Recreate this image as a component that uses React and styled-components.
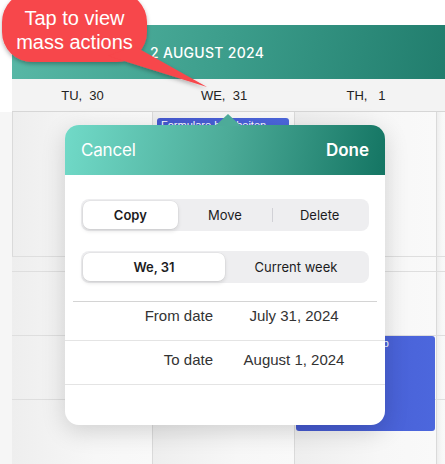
import React from 'react';
import styled, { createGlobalStyle } from 'styled-components';

const GlobalStyle = createGlobalStyle`
  html, body {
    margin: 0;
    padding: 0;
    background: #ffffff;
  }
  body {
    width: 445px;
    height: 464px;
    overflow: hidden;
    font-family: "Liberation Sans", Arial, sans-serif;
  }
`;

const Page = styled.div`
  position: relative;
  width: 445px;
  height: 464px;
  padding: 25px 0 0 12px;
  box-sizing: border-box;
  overflow: hidden;
  background: linear-gradient(to bottom, #ffffff 0, #ffffff 112px, #f6f6f6 112px);
`;

const Calendar = styled.div`
  display: flex;
  flex-direction: column;
  height: 100%;
`;

const TitleBar = styled.div`
  height: 54px;
  display: flex;
  align-items: center;
  padding-left: 138px;
  background: linear-gradient(100deg, #58b8a6 0%, #3c9d8b 50%, #217d6d 100%);
  color: #ffffff;
  font-family: Inter, "Liberation Sans", sans-serif;
  font-size: 14px;
  font-weight: 500;
  letter-spacing: 0.3px;
`;

const DayRow = styled.div`
  height: 33px;
  display: grid;
  grid-template-columns: 141px 142px 142px 1fr;
  align-items: center;
  background: #f3f3f3;
  border-bottom: 1px solid #d6d6d6;
  box-sizing: border-box;
`;

const DayName = styled.div`
  text-align: center;
  font-size: 13px;
  color: #222222;
`;

const Body = styled.div`
  flex: 1;
  display: grid;
  grid-template-columns: 141px 142px 142px 1fr;
  grid-template-rows: 145px 15px 64px 64px 1fr;
`;

const Cell = styled.div`
  position: relative;
  border-right: ${p => (p.$last ? 'none' : '1px solid #dadada')};
  border-left: ${p => (p.$first ? '1px solid #dadada' : 'none')};
  border-bottom: ${p => (p.$noBottom ? 'none' : '1px solid #dedede')};
  background: linear-gradient(90deg, #eeeeee 0%, #f7f7f7 60%, #f9f9f9 100%);
`;

const Event = styled.div`
  position: absolute;
  left: ${p => p.$left}px;
  right: ${p => p.$right}px;
  top: ${p => p.$top}px;
  height: ${p => p.$height}px;
  border-radius: 3px;
  background: linear-gradient(90deg, #4559cf, #4c67dd);
  color: #ffffff;
  font-size: 11px;
  padding: 1px 4px;
  box-sizing: border-box;
  white-space: nowrap;
  overflow: hidden;
  z-index: 1;
`;

const Callout = styled.div`
  position: absolute;
  left: 0;
  top: 0;
  width: 215px;
  height: 95px;
  z-index: 5;
`;

const CalloutText = styled.div`
  position: absolute;
  left: 2px;
  top: 6px;
  width: 145px;
  text-align: center;
  color: #ffffff;
  font-size: 20px;
  line-height: 24px;
`;

const Popover = styled.div`
  position: absolute;
  left: 65px;
  top: 125px;
  width: 320px;
  height: 300px;
  border-radius: 14px;
  background: #ffffff;
  box-shadow: 0 6px 24px rgba(0, 0, 0, 0.16);
  z-index: 3;
  display: flex;
  flex-direction: column;
`;

const Arrow = styled.div`
  position: absolute;
  left: 150px;
  top: -11px;
  width: 0;
  height: 0;
  border-left: 13px solid transparent;
  border-right: 13px solid transparent;
  border-bottom: 12px solid #4dab99;
`;

const PopHeader = styled.div`
  height: 50px;
  border-radius: 14px 14px 0 0;
  display: flex;
  align-items: center;
  justify-content: space-between;
  padding: 0 16px;
  background: linear-gradient(100deg, #71dac8 0%, #4cab98 50%, #147563 100%);
  color: #ffffff;
  font-family: Inter, "Liberation Sans", sans-serif;
  font-size: 17px;
`;

const HeaderButton = styled.span`
  font-weight: ${p => (p.$strong ? 600 : 400)};
  letter-spacing: ${p => (p.$strong ? '0' : '-0.2px')};
`;

const PopBody = styled.div`
  padding: 24px 16px 0;
  display: flex;
  flex-direction: column;
  gap: 20px;
`;

const Segmented = styled.div`
  display: grid;
  grid-template-columns: repeat(${p => p.$count}, 1fr);
  height: 32px;
  padding: 2px;
  box-sizing: border-box;
  border-radius: 8px;
  background: #eeeef0;
`;

const Segment = styled.div`
  position: relative;
  display: flex;
  align-items: center;
  justify-content: center;
  border-radius: 7px;
  font-family: Inter, "Liberation Sans", sans-serif;
  font-size: 13px;
  font-weight: ${p => (p.$active ? 600 : 400)};
  color: #1c1c1e;
  background: ${p => (p.$active ? '#ffffff' : 'transparent')};
  box-shadow: ${p => (p.$active ? '0 2px 4px rgba(0,0,0,0.12), 0 0 0 0.5px rgba(0,0,0,0.06)' : 'none')};

  &::before {
    content: '';
    display: ${p => (p.$divider ? 'block' : 'none')};
    position: absolute;
    left: 0;
    top: 7px;
    bottom: 7px;
    width: 1px;
    background: #d1d1d6;
  }
`;

const Divider = styled.div`
  height: 1px;
  margin: 18px 8px 0;
  background: #d4d4d4;
`;

const DateRow = styled.div`
  display: grid;
  grid-template-columns: 148px 162px;
  align-items: center;
  height: ${p => p.$height}px;
  padding-bottom: ${p => p.$pad}px;
  box-sizing: border-box;
  border-bottom: 1px solid #e4e4e4;
  font-size: 15px;
  color: #333333;
`;

const DateLabel = styled.div`
  text-align: right;
`;

const DateValue = styled.div`
  text-align: center;
`;

const days = ['TU,\u00a0 30', 'WE,\u00a0 31', 'TH,\u00a0 \u00a01'];

function CalloutBubble() {
  return (
    <Callout>
      <svg width="215" height="95" viewBox="0 0 215 95">
        <defs>
          <filter id="sh" x="-20%" y="-20%" width="140%" height="150%">
            <feDropShadow dx="0" dy="2" stdDeviation="2" floodColor="#000" floodOpacity="0.3" />
          </filter>
        </defs>
        <g filter="url(#sh)" fill="#f7464b">
          <rect x="2" y="-8" width="145" height="70" rx="30" ry="30" />
          <polygon points="108,56 134,46 207,87" />
        </g>
      </svg>
      <CalloutText>
        Tap to view
        <br />
        mass actions
      </CalloutText>
    </Callout>
  );
}

export default function App() {
  const rows = 5;
  const cells = [];
  for (let r = 0; r < rows; r++) {
    for (let c = 0; c < 4; c++) {
      cells.push(
        <Cell key={`${r}-${c}`} $first={c === 0 && r === 0} $last={c === 3} $noBottom={r === rows - 1}>
          {r === 0 && c === 1 && (
            <Event $left={4} $right={5} $top={6} $height={40}>Formulare bearbeiten</Event>
          )}
          {r === 3 && c === 2 && (
            <Event $left={1} $right={1} $top={0} $height={95}>Kick-off Workshop</Event>
          )}
        </Cell>
      );
    }
  }

  return (
    <>
      <GlobalStyle />
      <Page>
        <Calendar>
          <TitleBar>2 AUGUST 2024</TitleBar>
          <DayRow>
            {days.map(d => (
              <DayName key={d}>{d}</DayName>
            ))}
            <div />
          </DayRow>
          <Body>{cells}</Body>
        </Calendar>

        <Popover>
          <Arrow />
          <PopHeader>
            <HeaderButton>Cancel</HeaderButton>
            <HeaderButton $strong>Done</HeaderButton>
          </PopHeader>
          <PopBody>
            <Segmented $count={3}>
              <Segment $active>Copy</Segment>
              <Segment>Move</Segment>
              <Segment $divider>Delete</Segment>
            </Segmented>
            <Segmented $count={2}>
              <Segment $active>We, 31</Segment>
              <Segment>Current week</Segment>
            </Segmented>
          </PopBody>
          <Divider />
          <DateRow $height={39} $pad={11}>
            <DateLabel>From date</DateLabel>
            <DateValue>July 31, 2024</DateValue>
          </DateRow>
          <DateRow $height={44} $pad={7}>
            <DateLabel>To date</DateLabel>
            <DateValue>August 1, 2024</DateValue>
          </DateRow>
        </Popover>

        <CalloutBubble />
      </Page>
    </>
  );
}
